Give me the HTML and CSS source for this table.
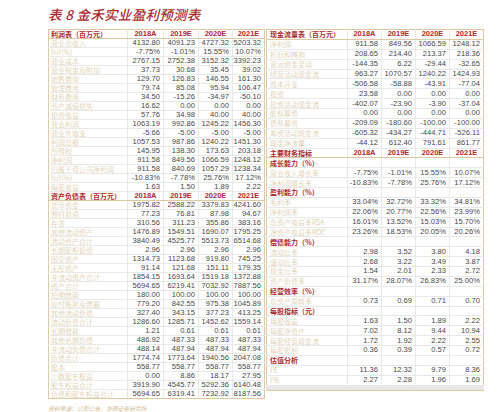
FILE: index.html
```html
<!DOCTYPE html>
<html lang="zh">
<head>
<meta charset="utf-8">
<title>金禾实业盈利预测表</title>
<link rel="stylesheet" href="styles.css">
</head>
<body>
<div class="page">
  <h1 class="title">表 8 金禾实业盈利预测表</h1>
  <div class="tables">
    <table class="tbl left">
      <colgroup><col class="c-l"><col class="c1"><col class="c2"><col class="c3"><col class="c4"></colgroup>
      <tr class="h"><td class="l">利润表（百万元）</td><td>2018A</td><td>2019E</td><td>2020E</td><td>2021E</td></tr>
      <tr><td class="l">营业总收入</td><td>4132.80</td><td>4091.23</td><td>4727.32</td><td>5203.32</td></tr>
      <tr><td class="l">YoY(%)</td><td>-7.75%</td><td>-1.01%</td><td>15.55%</td><td>10.07%</td></tr>
      <tr><td class="l">营业成本</td><td>2767.15</td><td>2752.38</td><td>3152.32</td><td>3392.23</td></tr>
      <tr><td class="l">营业税金及附加</td><td>37.73</td><td>30.68</td><td>35.45</td><td>39.02</td></tr>
      <tr><td class="l">销售费用</td><td>129.70</td><td>126.83</td><td>146.55</td><td>161.30</td></tr>
      <tr><td class="l">管理费用</td><td>79.74</td><td>85.08</td><td>95.94</td><td>106.47</td></tr>
      <tr><td class="l">财务费用</td><td>34.50</td><td>-15.26</td><td>-34.97</td><td>-50.10</td></tr>
      <tr><td class="l">资产减值损失</td><td>16.62</td><td>0.00</td><td>0.00</td><td>0.00</td></tr>
      <tr><td class="l">投资收益</td><td>57.76</td><td>34.98</td><td>40.00</td><td>40.00</td></tr>
      <tr><td class="l">营业利润</td><td>1063.19</td><td>992.86</td><td>1245.22</td><td>1456.30</td></tr>
      <tr><td class="l">营业外收支</td><td>-5.66</td><td>-5.00</td><td>-5.00</td><td>-5.00</td></tr>
      <tr><td class="l">利润总额</td><td>1057.53</td><td>987.86</td><td>1240.22</td><td>1451.30</td></tr>
      <tr><td class="l">所得税</td><td>145.95</td><td>138.30</td><td>173.63</td><td>203.18</td></tr>
      <tr><td class="l">净利润</td><td>911.58</td><td>849.56</td><td>1066.59</td><td>1248.12</td></tr>
      <tr><td class="l">归属于母公司净利润</td><td>911.58</td><td>840.69</td><td>1057.29</td><td>1238.34</td></tr>
      <tr><td class="l">YoY(%)</td><td>-10.83%</td><td>-7.78%</td><td>25.76%</td><td>17.12%</td></tr>
      <tr><td class="l">每股收益</td><td>1.63</td><td>1.50</td><td>1.89</td><td>2.22</td></tr>
      <tr class="h"><td class="l">资产负债表（百万元）</td><td>2018A</td><td>2019E</td><td>2020E</td><td>2021E</td></tr>
      <tr><td class="l">货币资金</td><td>1975.82</td><td>2588.22</td><td>3379.83</td><td>4241.60</td></tr>
      <tr><td class="l">预付款项</td><td>77.23</td><td>76.81</td><td>87.98</td><td>94.67</td></tr>
      <tr><td class="l">存货</td><td>310.56</td><td>311.23</td><td>355.86</td><td>383.16</td></tr>
      <tr><td class="l">其他流动资产</td><td>1476.89</td><td>1549.51</td><td>1690.07</td><td>1795.25</td></tr>
      <tr><td class="l">流动资产合计</td><td>3840.49</td><td>4525.77</td><td>5513.73</td><td>6514.68</td></tr>
      <tr><td class="l">长期股权投资</td><td>2.96</td><td>2.96</td><td>2.96</td><td>2.96</td></tr>
      <tr><td class="l">固定资产</td><td>1314.73</td><td>1123.68</td><td>919.80</td><td>745.25</td></tr>
      <tr><td class="l">无形资产</td><td>91.14</td><td>121.68</td><td>151.11</td><td>179.35</td></tr>
      <tr><td class="l">非流动资产合计</td><td>1854.15</td><td>1693.64</td><td>1519.18</td><td>1372.88</td></tr>
      <tr><td class="l">资产合计</td><td>5694.65</td><td>6219.41</td><td>7032.92</td><td>7887.56</td></tr>
      <tr><td class="l">短期借款</td><td>180.00</td><td>100.00</td><td>100.00</td><td>100.00</td></tr>
      <tr><td class="l">应付账款及票据</td><td>779.20</td><td>842.55</td><td>975.38</td><td>1045.89</td></tr>
      <tr><td class="l">其他流动负债</td><td>327.40</td><td>343.15</td><td>377.23</td><td>413.25</td></tr>
      <tr><td class="l">流动负债合计</td><td>1286.60</td><td>1285.71</td><td>1452.62</td><td>1559.14</td></tr>
      <tr><td class="l">长期借款</td><td>1.21</td><td>0.61</td><td>0.61</td><td>0.61</td></tr>
      <tr><td class="l">其他长期负债</td><td>486.92</td><td>487.33</td><td>487.33</td><td>487.33</td></tr>
      <tr><td class="l">非流动负债合计</td><td>488.14</td><td>487.94</td><td>487.94</td><td>487.94</td></tr>
      <tr><td class="l">负债合计</td><td>1774.74</td><td>1773.64</td><td>1940.56</td><td>2047.08</td></tr>
      <tr><td class="l">股本</td><td>558.77</td><td>558.77</td><td>558.77</td><td>558.77</td></tr>
      <tr><td class="l">少数股东权益</td><td>0.00</td><td>8.86</td><td>18.17</td><td>27.95</td></tr>
      <tr><td class="l">股东权益合计</td><td>3919.90</td><td>4545.77</td><td>5292.36</td><td>6140.48</td></tr>
      <tr><td class="l">负债和股东权益合计</td><td>5694.65</td><td>6319.41</td><td>7232.92</td><td>8187.56</td></tr>
    </table>
    <table class="tbl right">
      <colgroup><col class="c-l"><col class="c1"><col class="c2"><col class="c3"><col class="c4"></colgroup>
      <tr class="h"><td class="l">现金流量表（百万元）</td><td>2018A</td><td>2019E</td><td>2020E</td><td>2021E</td></tr>
      <tr><td class="l">净利润</td><td>911.58</td><td>849.56</td><td>1066.59</td><td>1248.12</td></tr>
      <tr><td class="l">折旧和摊销</td><td>208.65</td><td>214.40</td><td>213.37</td><td>218.36</td></tr>
      <tr><td class="l">营运资金变动</td><td>-144.35</td><td>6.22</td><td>-29.44</td><td>-32.65</td></tr>
      <tr><td class="l">经营活动现金流</td><td>963.27</td><td>1070.57</td><td>1240.22</td><td>1424.93</td></tr>
      <tr><td class="l">资本开支</td><td>-506.58</td><td>-58.88</td><td>-43.91</td><td>-77.04</td></tr>
      <tr><td class="l">投资</td><td>23.58</td><td>0.00</td><td>0.00</td><td>0.00</td></tr>
      <tr><td class="l">投资活动现金流</td><td>-402.07</td><td>-23.90</td><td>-3.90</td><td>-37.04</td></tr>
      <tr><td class="l">股权募资</td><td>0.00</td><td>0.00</td><td>0.00</td><td>0.00</td></tr>
      <tr><td class="l">债务募资</td><td>-209.09</td><td>-180.60</td><td>-100.00</td><td>-100.00</td></tr>
      <tr><td class="l">筹资活动现金流</td><td>-605.32</td><td>-434.27</td><td>-444.71</td><td>-526.11</td></tr>
      <tr><td class="l">现金净流量</td><td>-44.12</td><td>612.40</td><td>791.61</td><td>861.77</td></tr>
      <tr class="h"><td class="l">主要财务指标</td><td>2018A</td><td>2019E</td><td>2020E</td><td>2021E</td></tr>
      <tr class="s"><td class="l">成长能力（%）</td><td></td><td></td><td></td><td></td></tr>
      <tr><td class="l">营业收入增长率</td><td>-7.75%</td><td>-1.01%</td><td>15.55%</td><td>10.07%</td></tr>
      <tr><td class="l">净利润增长率</td><td>-10.83%</td><td>-7.78%</td><td>25.76%</td><td>17.12%</td></tr>
      <tr class="s"><td class="l">盈利能力（%）</td><td></td><td></td><td></td><td></td></tr>
      <tr><td class="l">毛利率</td><td>33.04%</td><td>32.72%</td><td>33.32%</td><td>34.81%</td></tr>
      <tr><td class="l">净利润率</td><td>22.06%</td><td>20.77%</td><td>22.56%</td><td>23.99%</td></tr>
      <tr><td class="l">总资产收益率RSA</td><td>16.01%</td><td>13.52%</td><td>15.03%</td><td>15.70%</td></tr>
      <tr><td class="l">净资产收益率ROE</td><td>23.26%</td><td>18.53%</td><td>20.05%</td><td>20.26%</td></tr>
      <tr class="s"><td class="l">偿债能力（%）</td><td></td><td></td><td></td><td></td></tr>
      <tr><td class="l">流动比率</td><td>2.98</td><td>3.52</td><td>3.80</td><td>4.18</td></tr>
      <tr><td class="l">速动比率</td><td>2.68</td><td>3.22</td><td>3.49</td><td>3.87</td></tr>
      <tr><td class="l">现金比率</td><td>1.54</td><td>2.01</td><td>2.33</td><td>2.72</td></tr>
      <tr><td class="l">资产负债率</td><td>31.17%</td><td>28.07%</td><td>26.83%</td><td>25.00%</td></tr>
      <tr class="s"><td class="l">经营效率（%）</td><td></td><td></td><td></td><td></td></tr>
      <tr><td class="l">总资产周转率</td><td>0.73</td><td>0.69</td><td>0.71</td><td>0.70</td></tr>
      <tr class="s"><td class="l">每股指标（元）</td><td></td><td></td><td></td><td></td></tr>
      <tr><td class="l">每股收益</td><td>1.63</td><td>1.50</td><td>1.89</td><td>2.22</td></tr>
      <tr><td class="l">每股净资产</td><td>7.02</td><td>8.12</td><td>9.44</td><td>10.94</td></tr>
      <tr><td class="l">每股经营现金流</td><td>1.72</td><td>1.92</td><td>2.22</td><td>2.55</td></tr>
      <tr><td class="l">每股股利</td><td>0.36</td><td>0.39</td><td>0.57</td><td>0.72</td></tr>
      <tr class="s"><td class="l">估值分析</td><td></td><td></td><td></td><td></td></tr>
      <tr><td class="l">PE</td><td>11.36</td><td>12.32</td><td>9.79</td><td>8.36</td></tr>
      <tr><td class="l">PB</td><td>2.27</td><td>2.28</td><td>1.96</td><td>1.69</td></tr>
      <tr><td class="l"></td><td></td><td></td><td></td><td></td></tr>
      <tr><td class="l"></td><td></td><td></td><td></td><td></td></tr>
      <tr><td class="l"></td><td></td><td></td><td></td><td></td></tr>
      <tr><td class="l"></td><td></td><td></td><td></td><td></td></tr>
      <tr><td class="l"></td><td></td><td></td><td></td><td></td></tr>
    </table>
  </div>
  <p class="source">资料来源：公司公告，华西证券研究所</p>
  <p class="next">（ 金禾实业 ）</p>
</div>
</body>
</html>
```

FILE: styles.css
```css
html, body {
  margin: 0;
  padding: 0;
  background: #ffffff;
}

body {
  width: 499px;
  height: 412px;
  overflow: hidden;
  font-family: "Liberation Sans", "Noto Sans CJK SC", sans-serif;
}

.page {
  padding: 7px 0 0 48px;
}

.title {
  margin: 0;
  height: 22px;
  font-family: "Noto Sans CJK SC", sans-serif;
  font-size: 13.5px;
  line-height: 15px;
  font-style: italic;
  font-weight: 500;
  color: #a92a2f;
  letter-spacing: 0.3px;
}

.tables {
  display: flex;
  gap: 1px;
  align-items: flex-start;
}

.tbl {
  border-collapse: collapse;
  table-layout: fixed;
  height: 362px;
  border: 1px solid #dcc8a2;
}

.left { width: 216px; }
.right { width: 217px; }

.left .c-l { width: 79px; }
.left .c1 { width: 36px; }
.left .c2 { width: 35px; }
.left .c3 { width: 34px; }
.left .c4 { width: 32px; }

.right .c-l { width: 81px; }
.right .c1 { width: 34px; }
.right .c2 { width: 34px; }
.right .c3 { width: 34px; }
.right .c4 { width: 34px; }

.tbl td {
  border: 1px solid #e8e8e8;
  padding: 0 3px 0 0;
  font-size: 7.6px;
  line-height: 8px;
  text-align: right;
  color: #474747;
  white-space: nowrap;
  overflow: hidden;
}

.tbl td.l {
  text-align: left;
  padding: 0 0 0 2px;
  font-family: "Noto Sans CJK SC", sans-serif;
  font-size: 7px;
  font-weight: 300;
  color: #d2ba8e;
  border-left-color: #dcc8a2;
}

.right td.l {
  padding-left: 3px;
}

.tbl td:last-child {
  border-right-color: #dcc8a2;
}

.tbl tr.h td {
  color: #a92a2f;
  font-weight: 700;
  font-size: 7.5px;
  text-align: center;
  padding: 0;
  border-top: 1px solid #dcc8a2;
  border-bottom: 1px solid #dcc8a2;
}

.tbl tr.h td.l {
  text-align: left;
  padding-left: 2px;
  font-size: 7px;
}

.right tr.h td.l {
  padding-left: 3px;
}

.tbl tr.s td.l {
  color: #a92a2f;
  font-weight: 700;
}

.tbl tr:last-child td {
  border-bottom-color: #dcc8a2;
}

.source {
  margin: 6px 0 0 0;
  font-family: "Noto Sans CJK SC", sans-serif;
  font-size: 5.8px;
  line-height: 7px;
  font-style: italic;
  color: #d3bb90;
}

.next {
  margin: 2px 0 0 102px;
  font-family: "Noto Sans CJK SC", sans-serif;
  font-size: 9px;
  line-height: 10px;
  color: #333333;
}
```
